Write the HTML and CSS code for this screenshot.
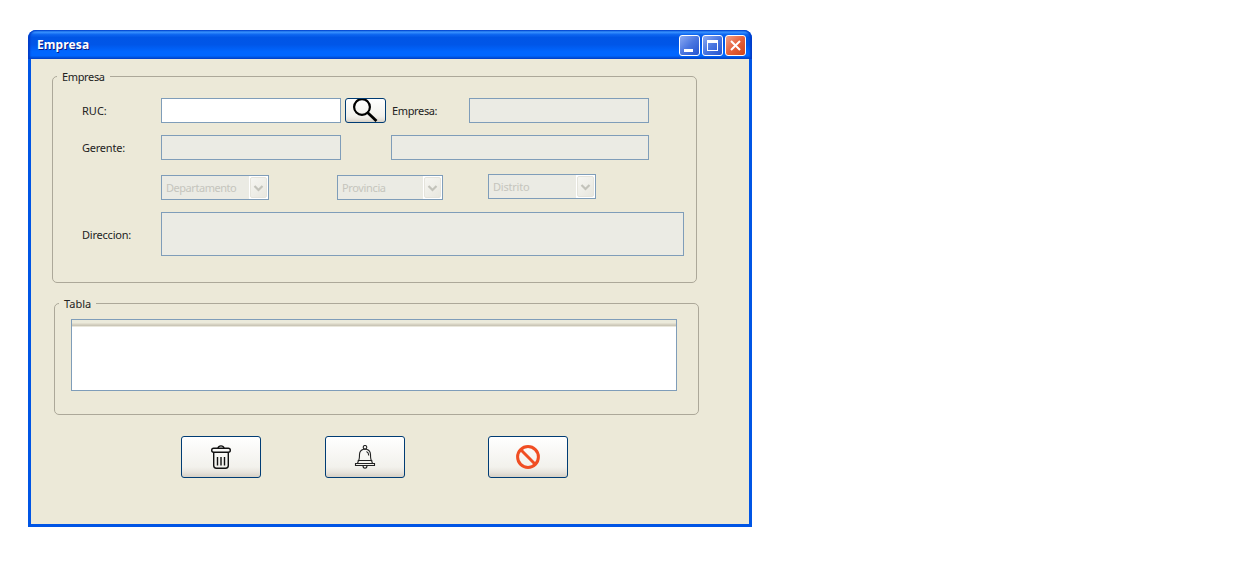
FILE: index.html
```html
<!DOCTYPE html>
<html lang="es">
<head>
<meta charset="utf-8">
<title>Empresa</title>
<link rel="stylesheet" href="styles.css">
</head>
<body>
<main class="window">
  <header class="titlebar">
    <h1 class="title">Empresa</h1>
    <div class="controls">
      <button class="control" aria-label="Minimizar"><svg width="19" height="19"><rect x="4" y="13" width="9" height="3" fill="#fff"/></svg></button>
      <button class="control" aria-label="Maximizar"><svg width="19" height="19"><path d="M4 4h11v11H4zM5 7v7h9V7z" fill="#fff" fill-rule="evenodd"/></svg></button>
      <button class="control close" aria-label="Cerrar"><svg width="19" height="19"><path d="M5 5l9 9M14 5l-9 9" stroke="#fff" stroke-width="2"/></svg></button>
    </div>
  </header>
  <div class="content">
    <fieldset class="group">
      <legend class="tight">Empresa</legend>
      <div class="row">
        <label class="label">RUC:</label>
        <input class="field">
        <button class="button search" aria-label="Buscar"><svg width="39" height="23"><circle cx="16" cy="8" r="7.900" fill="none" stroke="#000" stroke-width="2.200"/><path d="M21.500 13.500l9 8.500" stroke="#000" stroke-width="2.800"/></svg></button>
        <label class="label second tight">Empresa:</label>
        <input class="field" disabled>
      </div>
      <div class="row">
        <label class="label snug">Gerente:</label>
        <input class="field" disabled>
        <input class="field surname" disabled>
      </div>
      <div class="row combos">
        <div class="combo"><span class="value tighter">Departamento</span><span class="arrow"><svg width="17" height="21"><path d="M3.500 8l4 4 4-4" fill="none" stroke="#c3c3bb" stroke-width="2.200"/></svg></span></div>
        <div class="combo province"><span class="value tight">Provincia</span><span class="arrow"><svg width="17" height="21"><path d="M3.500 8l4 4 4-4" fill="none" stroke="#c3c3bb" stroke-width="2.200"/></svg></span></div>
        <div class="combo district"><span class="value snug">Distrito</span><span class="arrow"><svg width="17" height="21"><path d="M3.500 8l4 4 4-4" fill="none" stroke="#c3c3bb" stroke-width="2.200"/></svg></span></div>
      </div>
      <div class="row address">
        <label class="label snug">Direccion:</label>
        <textarea class="field area" disabled></textarea>
      </div>
    </fieldset>
    <fieldset class="group list">
      <legend>Tabla</legend>
      <div class="table"><div class="table-head"></div></div>
    </fieldset>
    <div class="actions">
      <button class="button" aria-label="Eliminar"><svg width="24" height="24" fill="none" stroke="#111" stroke-width="1.400"><path d="M9 3.200Q9.500 .9 12 .9t3 2.300"/><rect x="2.700" y="3.300" width="18.600" height="4" rx="2"/><path d="M4.700 7.500V20.500q0 2.700 2.700 2.700h9.200q2.700 0 2.700-2.700V7.500"/><path d="M8.500 12v8.500M12 12v8.500M15.500 12v8.500"/></svg></button>
      <button class="button" aria-label="Avisar"><svg width="24" height="24" fill="none" stroke="#222" stroke-width="1.100"><circle cx="12" cy="2.300" r="1.800"/><path d="M10.500 4.200Q6.600 5.300 6.500 9.500C6.500 12.500 6.300 14.500 5.500 15.500H18.500C17.700 14.500 17.500 12.500 17.500 9.500Q17.400 5.300 13.500 4.200Z"/><path d="M13.500 6.500Q15.700 7.500 15.700 10.500M5.500 15.500L4.500 18.500H2.500V20.500h19V18.500H19.500L18.500 15.500M4.500 18.500h15M10 20.500q0 2.700 2 2.700t2-2.700"/></svg></button>
      <button class="button" aria-label="Cancelar"><svg width="24" height="24" fill="none" stroke="#f04e23" stroke-width="3"><circle cx="12" cy="12" r="10.400"/><path d="M4.800 4.800l14.400 14.400"/></svg></button>
    </div>
  </div>
</main>
</body>
</html>
```

FILE: styles.css
```css
* { box-sizing: border-box; }
body {
  margin: 0;
  padding: 30px 28px;
  background: #fff;
  font: 11px/15px "Noto Sans", sans-serif;
  color: #222;
}
svg { display: block; flex: none; }
.snug { letter-spacing: -0.22px; }
.tight { letter-spacing: -0.36px; }
.tighter { letter-spacing: -0.46px; }
.window {
  width: 724px;
  height: 497px;
  background: #0055e5;
  border-radius: 8px 8px 0 0;
  overflow: hidden;
}
.titlebar {
  display: flex;
  align-items: center;
  justify-content: space-between;
  height: 29px;
  padding: 1px 6px 0 9px;
  border-radius: 8px 8px 0 0;
  background: linear-gradient(#0050d8 0, #3b94ff 7%, #0c65f0 16%, #0055e5 26%, #0056e8 50%, #0066ff 75%, #0066ff 88%, #0048c8 100%);
  box-shadow: inset 2px 0 2px #003cc8, inset -2px 0 2px #003cc8;
}
.title {
  margin: 0;
  font-size: 12px;
  font-weight: 700;
  line-height: 18px;
  letter-spacing: 0.1px;
  color: #fff;
  text-shadow: 1px 1px 0 #0a1883;
}
.controls { display: flex; gap: 2px; }
.control {
  width: 21px;
  height: 21px;
  padding: 0;
  border: 1px solid #fff;
  border-radius: 3px;
  background: linear-gradient(135deg, #8caaf2, #4a76e0 50%, #2454d0);
}
.close { background: linear-gradient(135deg, #f0a088, #e6623c 50%, #d04418); }
.content {
  height: 465px;
  margin: 0 3px;
  padding: 10px 0 0 21px;
  background: #ece9d8;
}
.group {
  display: flex;
  flex-direction: column;
  width: 645px;
  height: 214px;
  min-width: 0;
  margin: 0;
  padding: 14px 0 0 29px;
  border: 1px solid #aca899;
  border-radius: 5px;
}
legend {
  height: 15px;
  margin-left: -25px;
  padding: 0 5px;
}
.row { display: flex; height: 25px; margin-bottom: 12px; }
.label { width: 79px; line-height: 26px; }
.second { width: 77px; margin-left: 6px; }
.field {
  width: 180px;
  height: 25px;
  margin: 0;
  padding: 3px;
  border: 1px solid #7f9db9;
  border-radius: 0;
  background: #fff;
  font: inherit;
  resize: none;
}
.field:disabled { background: #ebebe4; }
.surname { width: 258px; margin-left: 50px; }
.button {
  display: flex;
  align-items: center;
  justify-content: center;
  width: 80px;
  height: 42px;
  padding: 0;
  border: 1px solid #003c74;
  border-radius: 3px;
  background: linear-gradient(#fff, #f2f1ec 75%, #e8e4dd 88%, #d6d0c5);
}
.search { width: 41px; height: 25px; margin-left: 4px; }
.combos { margin: 3px 0 12px 79px; }
.combo {
  display: flex;
  justify-content: space-between;
  width: 108px;
  height: 25px;
  border: 1px solid #7f9db9;
  background: #ebebe4;
  color: #c5c5bd;
}
.province { width: 106px; margin-left: 68px; }
.district { margin: -1px 0 0 45px; }
.value { padding-left: 4px; line-height: 24px; }
.arrow {
  width: 19px;
  padding: 1px 0 0 1px;
  background: #fff;
}
.arrow svg {
  border: 1px solid #e5e4dc;
  border-radius: 2px;
  background: linear-gradient(135deg, #f6f6f2, #e8e7df);
}
.address { height: 44px; margin: 0; }
.address .label { line-height: 46px; }
.area { width: 523px; height: 44px; }
.list {
  height: 119px;
  margin: 13px 0 0 2px;
  padding: 8px 0 0 16px;
}
.list legend { margin-left: -12px; }
.table {
  width: 606px;
  height: 72px;
  border: 1px solid #7f9db9;
  background: #fff;
}
.table-head {
  height: 7px;
  background: linear-gradient(#ebeadb 0 3px, #e2dfd0 3px 4px, #d6d2c2 4px 5px, #cbc7b8 5px 6px, #e9e7dc 6px);
}
.actions { display: flex; padding: 21px 0 0 129px; }
.actions .button + .button { margin-left: 64px; }
.actions .button:last-child { margin-left: 83px; }
```
